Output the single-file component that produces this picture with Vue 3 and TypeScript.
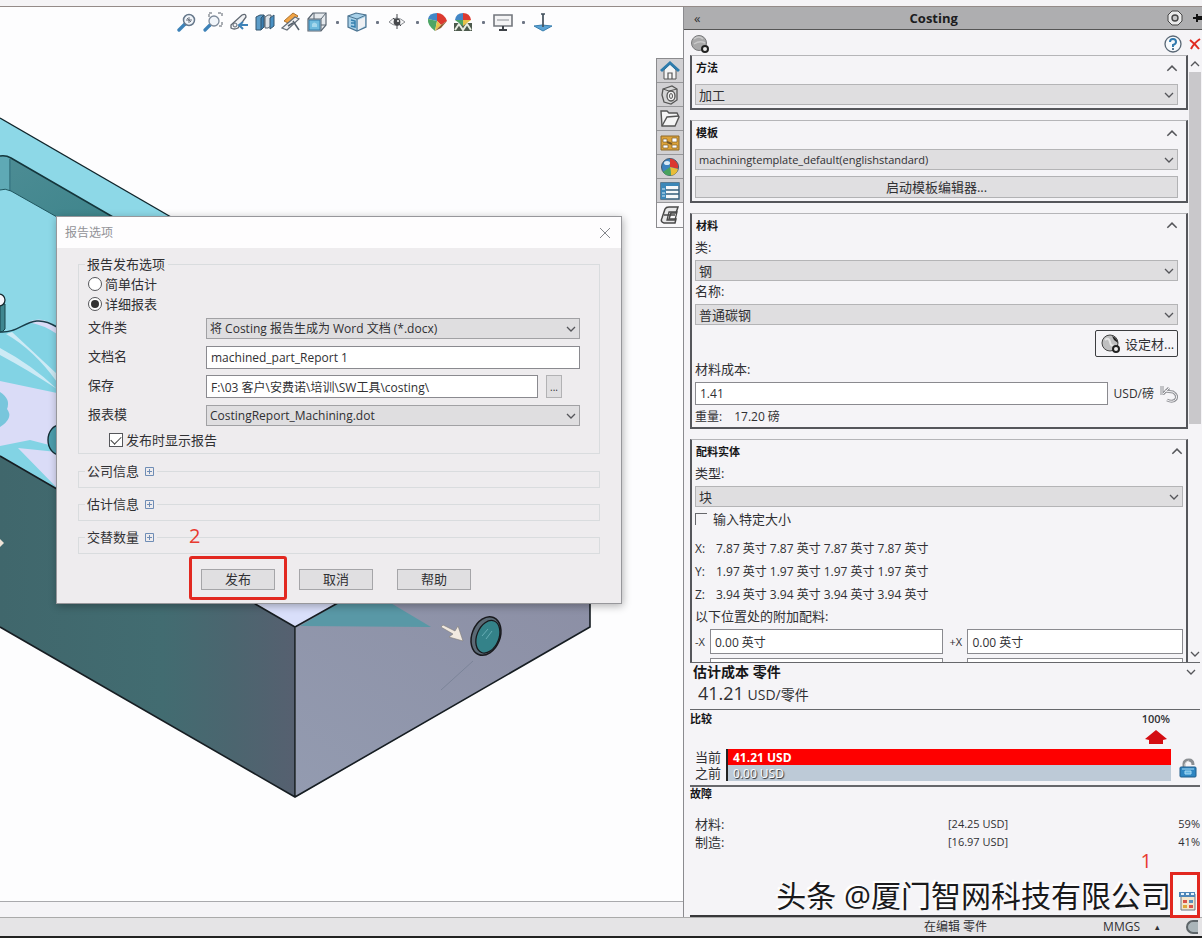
<script setup lang="ts">
import { ref } from 'vue'

const method = ref('加工')
const template = ref('machiningtemplate_default(englishstandard)')
const materialClass = ref('钢')
const materialName = ref('普通碳钢')
const materialCost = ref('1.41')
const stockType = ref('块')
const customSize = ref(false)
const reportMode = ref('detailed')
const fileType = ref('将 Costing 报告生成为 Word 文档 (*.docx)')
const docName = ref('machined_part_Report 1')
const savePath = ref('F:\\03 客户\\安费诺\\培训\\SW工具\\costing\\')
const reportTemplate = ref('CostingReport_Machining.dot')
const showReport = ref(true)

const dimensions = [
  { axis: 'X:', value: '7.87 英寸' },
  { axis: 'Y:', value: '1.97 英寸' },
  { axis: 'Z:', value: '3.94 英寸' },
]
const breakdown = [
  { label: '材料:', cost: '[24.25 USD]', share: '59%' },
  { label: '制造:', cost: '[16.97 USD]', share: '41%' },
]
const extraGroups = ['公司信息', '估计信息', '交替数量']
</script>

<template>
  <div class="app">
    <div class="topstrip"></div>
    <main class="main">
      <section class="viewport">
        <svg class="scene" viewBox="0 7 683 895" width="683" height="895" aria-hidden="true">
          <defs>
            <linearGradient id="leftFace" x1="0" x2="1" y1="0" y2="0">
              <stop offset="0" stop-color="#40676c" />
              <stop offset="0.55" stop-color="#426c71" />
              <stop offset="0.8" stop-color="#4c656f" />
              <stop offset="1" stop-color="#566070" />
            </linearGradient>
            <linearGradient id="pocket" x1="0" x2="1" y1="0" y2="1">
              <stop offset="0" stop-color="#4c8c94" />
              <stop offset="1" stop-color="#3f858c" />
            </linearGradient>
            <linearGradient id="rightFace" x1="0" x2="1" y1="1" y2="0">
              <stop offset="0" stop-color="#939bb0" />
              <stop offset="1" stop-color="#8c8fa5" />
            </linearGradient>
          </defs>
          <path d="M0 118 L171 217 L171 500 L0 500Z" fill="#8dd8e7" />
          <path d="M0 156 Q6 155 11 158 L11 191 Q5 188 0 190Z" fill="#5fa9b5" />
          <path d="M11 158 L113 217 L57 217 L11 191Z" fill="url(#pocket)" />
          <path d="M0 118 L171 217" stroke="#10242a" stroke-width="1.4" />
          <path d="M0 156 Q6 155 11 158 L113 217" fill="none" stroke="#14353b" stroke-width="1.5" />
          <path d="M10 159 V191 M0 190 Q5 188 11 191 L57 217" fill="none" stroke="#1f555e" stroke-width="1" />
          <path d="M0 332 C22 334 30 310 57 327 L57 490 L0 456Z" fill="#82d3e4" />
          <path d="M28 322 Q42 315 57 327 V334 Q44 325 28 322Z M0 381 L57 393 V447 L30 440 L0 446Z M18 448 L57 452 V488Z" fill="#dadcf7" />
          <path d="M12 332 L57 374 V382 Q34 350 6 334Z M0 348 Q32 365 57 389 Q28 370 0 355Z" fill="#e6f1fb" opacity=".75" />
          <path d="M0 392 Q11 399 7 409 Q14 418 0 427Z" fill="#78c6dc" />
          <path d="M0 332 C22 334 30 310 57 327" fill="none" stroke="#193e4a" stroke-width="1.5" />
          <path d="M0 304 H5 V329 Q3 332 0 332Z" fill="#3f8790" stroke="#18444c" />
          <circle cx="-1" cy="300" r="6" fill="#f4f4fa" stroke="#17282e" stroke-width="1.3" />
          <ellipse cx="60" cy="440" rx="12" ry="15" fill="#4d9ead" stroke="#142d34" stroke-width="1.4" />
          <path d="M0 456 L295 627 V797 L0 627Z" fill="url(#leftFace)" />
          <path d="M200 570 L296 627 L345 599 V570Z" fill="#d9dffa" />
          <path d="M296 627 L345 599 H590 V627 L296 797Z" fill="url(#rightFace)" />
          <path d="M300 626 L345 599 H384 L431 627Z" fill="#5998a6" />
          <path d="M0 456 L295 627 M295 627 V797 M0 627 L295 797 L590 627 V599 M295 627 L345 599" fill="none" stroke="#161d22" stroke-width="1.6" />
          <g transform="rotate(22 486 636)">
            <ellipse cx="486" cy="636" rx="14" ry="20" fill="#5b6975" stroke="#18191d" stroke-width="1.5" />
            <ellipse cx="488" cy="636" rx="11" ry="17" fill="#348289" stroke="#18191d" stroke-width="1.3" />
          </g>
          <path d="M482 636 L488 629 M486 639 L492 631" stroke="#68adb5" />
          <path d="M473 661 L441 690" stroke="#727d91" stroke-width=".7" />
          <path d="M441 627 L443 625 L455 631 L458 626 L463 641 L449 637 L453 634Z" fill="#f1e9e0" stroke="#817d78" stroke-width=".6" />
          <path d="M0 539 L4 543 L0 547Z" fill="#eee3d7" />
        </svg>

        <nav class="toolbar" aria-label="视图工具">
          <button class="tool" type="button" aria-label="整屏显示全图">
            <svg viewBox="0 0 20 20"><path d="M2 18 L8 12" stroke="#3d82b8" stroke-width="3.4" stroke-linecap="round" /><circle cx="12" cy="8" r="5.5" fill="#f1f5fa" stroke="#66788b" stroke-width="1.5" /><path d="M9 8h6M12 5v6M10 6l4 4" stroke="#6c7480" fill="none" /></svg>
          </button>
          <button class="tool" type="button" aria-label="局部放大">
            <svg viewBox="0 0 20 20"><path d="M2 18 L7 13" stroke="#3d82b8" stroke-width="3.2" stroke-linecap="round" /><circle cx="11" cy="9" r="5" fill="#f1f5fa" stroke="#7d8a9a" stroke-width="1.3" /><path d="M6 5V1h4M15 1h4v4M19 10v4h-3" stroke="#59616b" fill="none" stroke-dasharray="3 1" /></svg>
          </button>
          <button class="tool" type="button" aria-label="上一视图">
            <svg viewBox="0 0 20 20"><path d="M2 13 L13 3 Q17 1 17 5 L9 16 Q5 18 2 16Z" fill="#f1f2f4" stroke="#606872" stroke-width="1.3" /><circle cx="6" cy="13" r="2" fill="none" stroke="#606872" /><path d="M19 13h-7M14 10l-4 3 4 4" fill="none" stroke="#3d82b8" stroke-width="2" /></svg>
          </button>
          <button class="tool" type="button" aria-label="剖面视图">
            <svg viewBox="0 0 20 20"><path d="M1 5l4-2h4v12l-3 3H1Z" fill="#5d9dc9" stroke="#33546f" /><path d="M6 6l3-3v12l-3 3Z" fill="#3a7eb0" stroke="#33546f" /><path d="M10 5l3-2h3v11l-3 2h-3Z" fill="#dfe4e9" stroke="#56616c" /><path d="M15 6l4-3v11l-4 3Z" fill="#4a91c4" stroke="#33546f" /></svg>
          </button>
          <button class="tool" type="button" aria-label="动态注解视图">
            <svg viewBox="0 0 20 20"><path d="M3 9 L12 1l5 3-8 8Z" fill="#f2a445" stroke="#ae732f" /><path d="M1 16 L14 5l4 2L6 18Z" fill="#f1f2f4" stroke="#656e78" stroke-width="1.2" /><path d="M12 9l6 9M12 11l-5 3" stroke="#56616c" stroke-width="1.5" /></svg>
          </button>
          <button class="tool" type="button" aria-label="视图定向">
            <svg viewBox="0 0 20 20"><path d="M1 7l5-6h13v12l-5 6H1Z" fill="#e5e9ed" stroke="#596571" stroke-width="1.2" /><path d="M2 8h11v10H2Z" fill="#6fbbdd" stroke="#347da9" /><path d="M5 12q2-3 5 0v3H5Z" fill="#a5d8ec" /><path d="M1 7h13v12M14 7l5-6M7 1v6M14 13h5" fill="none" stroke="#596571" /></svg>
          </button>
          <span class="dot"></span>
          <button class="tool" type="button" aria-label="显示样式">
            <svg viewBox="0 0 20 20"><path d="M1 4l8-3 10 2v12l-9 4-9-4Z" fill="#a7d0e8" stroke="#4d7592" stroke-width="1.2" /><path d="M1 4l9 3v12M10 7l9-4" fill="none" stroke="#4d7592" /><path d="M11 8l7-3v9l-7 4Z" fill="#eef0f3" /><path d="M4 8l4 1v6l-4-1M4 11h4" fill="none" stroke="#357fad" stroke-width="1.5" /></svg>
          </button>
          <span class="dot"></span>
          <button class="tool" type="button" aria-label="隐藏项目">
            <svg viewBox="0 0 20 20"><path d="M2 10q7-8 16 0-8 7-16 0Z" fill="#f7f7f8" stroke="#8b8e93" /><circle cx="10" cy="10" r="3.4" fill="#47494c" /><path d="M10 2v15M6 6l8 8" stroke="#47494c" /><circle cx="11" cy="9" r="1" fill="#fff" /></svg>
          </button>
          <span class="dot"></span>
          <button class="tool" type="button" aria-label="编辑外观">
            <svg viewBox="0 0 20 20"><path d="M10 9L1 7Q2 1 10 1Z" fill="#4387c6" /><path d="M10 9V1q7 0 10 8l-6 4Z" fill="#dc3a30" /><path d="M10 9L1 7q-1 6 7 12Z" fill="#4da565" /><path d="M10 9l4 4-6 6Z" fill="#e7c349" /><path d="M20 9l-6 7-6 3 6-6Z" fill="#8d5d31" /></svg>
          </button>
          <button class="tool" type="button" aria-label="应用布景">
            <svg viewBox="0 0 20 20"><path d="M1 11h18v8H1Z" fill="#4c5a4c" /><path d="M2 18l4-6 4 6 4-6 4 6" fill="none" stroke="#e8ede2" stroke-width="2" /><path d="M10 8H2Q3 1 10 1Z" fill="#4387c6" /><path d="M10 8V1q7 0 8 7Z" fill="#dc3a30" /><path d="M2 8h8v6Z" fill="#4da565" /><path d="M10 8h8l-8 6Z" fill="#e7c349" /></svg>
          </button>
          <span class="dot"></span>
          <button class="tool" type="button" aria-label="视图设定">
            <svg viewBox="0 0 20 20"><path d="M1 3h18v11H1Z" fill="#f4f4f5" stroke="#73777d" stroke-width="1.6" /><path d="M4 8h12" stroke="#8a8e94" /><path d="M10 14v3M6 18h8" stroke="#3d4147" stroke-width="2" /></svg>
          </button>
          <span class="dot"></span>
          <button class="tool" type="button" aria-label="参考平面">
            <svg viewBox="0 0 20 20"><path d="M1 14l8-1 10 1-9 5Z" fill="#5ba3d4" stroke="#397faf" /><path d="M10 2v13M8 2h4" stroke="#42505c" stroke-width="1.7" /></svg>
          </button>
        </nav>

        <nav class="tabs" aria-label="任务窗格">
          <button class="tab" type="button" aria-label="主页">
            <svg viewBox="0 0 20 20"><path d="M4 9v9h12V9l-6-6Z" fill="#f4f4f4" stroke="#555" /><path d="M1 10l9-8 9 8" fill="none" stroke="#2f7cac" stroke-width="3" /><path d="M8 18v-6h4v6" fill="none" stroke="#555" stroke-width="1.2" /></svg>
          </button>
          <button class="tab" type="button" aria-label="设计库">
            <svg viewBox="0 0 20 20"><path d="M3 4l9-3 5 3v11l-6 4-7-2-2-7Z" fill="#d5d5d6" stroke="#555" stroke-width="1.3" /><path d="M3 4l6 2 8-2" fill="none" stroke="#555" /><ellipse cx="11" cy="11" rx="4" ry="5" fill="#f1f1f1" stroke="#555" stroke-width="1.3" /><ellipse cx="11" cy="11" rx="1.5" ry="2.5" fill="none" stroke="#555" /></svg>
          </button>
          <button class="tab" type="button" aria-label="文件探索器">
            <svg viewBox="0 0 20 20"><path d="M2 17L1 2h6l2 2h8l2 4-4 9Z" fill="#f5f5f5" stroke="#555" stroke-width="1.4" /><path d="M2 17l5-9 12-1" fill="none" stroke="#555" stroke-width="1.4" /></svg>
          </button>
          <button class="tab" type="button" aria-label="视图调色板">
            <svg viewBox="0 0 20 20"><path d="M1 3h18v14H1Z" fill="#dda33a" stroke="#8c682b" /><path d="M3 6h4v3H3ZM12 5h5v4h-5ZM3 12h5v3H3ZM12 12h5v3h-5Z" fill="#fff" stroke="#765929" stroke-width=".7" /><path d="M7 9l5 2" stroke="#765929" stroke-width="2" /></svg>
          </button>
          <button class="tab" type="button" aria-label="外观">
            <svg viewBox="0 0 20 20"><circle cx="10" cy="10" r="8.5" fill="#3b83c0" stroke="#425768" /><path d="M10 10V1.500a8.500 8.500 0 0 1 8 10Z" fill="#dc3730" /><path d="M10 10l8 2a8.500 8.500 0 0 1-7 6.500Z" fill="#e9bd38" /><path d="M10 10l1 8.500A8.500 8.500 0 0 1 3 15Z" fill="#48a25e" /><ellipse cx="7" cy="6" rx="3" ry="2" fill="#d9ebf7" /></svg>
          </button>
          <button class="tab" type="button" aria-label="自定义属性">
            <svg viewBox="0 0 20 20"><path d="M1 2h18v16H1Z" fill="#f6f8fa" stroke="#345d7b" stroke-width="1.4" /><path d="M1 2h5v16H1ZM1 2h18v3H1Z" fill="#3c87b8" /><path d="M6 9h13M6 13h13" stroke="#345d7b" stroke-width="1.4" /><path d="M2 8h3M2 12h3M2 15h3" stroke="#d7eaf6" /></svg>
          </button>
          <button class="tab active" type="button" aria-label="Costing">
            <svg viewBox="0 0 20 20"><path d="M5 4q1-2 4-2h9l-2 6h-5l-2 6h7l-1 4H4q-4-1-2-5Z" fill="#e7e7e8" stroke="#484848" stroke-width="1.5" /><path d="M9 7h8l-2 8H7ZM4 10h11" fill="none" stroke="#484848" stroke-width="1.3" /></svg>
          </button>
        </nav>

        <form class="dialog" role="dialog" aria-label="报告选项" @submit.prevent>
          <header class="dlg-title">
            <span>报告选项</span>
            <button class="close" type="button" aria-label="关闭">
              <svg viewBox="0 0 12 12" width="12" height="12"><path d="M1 1l10 10M11 1L1 11" stroke="#85878c" /></svg>
            </button>
          </header>
          <fieldset class="group first">
            <legend>报告发布选项</legend>
            <label class="choice"><input v-model="reportMode" type="radio" name="mode" value="simple" />简单估计</label>
            <label class="choice"><input v-model="reportMode" type="radio" name="mode" value="detailed" />详细报表</label>
            <div class="form-grid">
              <label for="fileType">文件类</label>
              <div class="select">
                <select id="fileType" v-model="fileType"><option>{{ fileType }}</option></select>
                <svg viewBox="0 0 10 6"><path d="M1 1l4 4 4-4" /></svg>
              </div>
              <label for="docName">文档名</label>
              <input id="docName" v-model="docName" class="text" type="text" />
              <label for="savePath">保存</label>
              <div class="path">
                <input id="savePath" v-model="savePath" class="text" type="text" />
                <button class="btn" type="button" aria-label="浏览">...</button>
              </div>
              <label for="reportTemplate">报表模</label>
              <div class="select">
                <select id="reportTemplate" v-model="reportTemplate"><option>{{ reportTemplate }}</option></select>
                <svg viewBox="0 0 10 6"><path d="M1 1l4 4 4-4" /></svg>
              </div>
            </div>
            <label class="choice indent"><input v-model="showReport" type="checkbox" />发布时显示报告</label>
          </fieldset>
          <fieldset v-for="name in extraGroups" :key="name" class="group extra">
            <legend>
              {{ name }}
              <button class="expand" type="button" :aria-label="'展开' + name">
                <svg viewBox="0 0 9 9" width="9" height="9"><path d="M.5.5h8v8h-8ZM2 4.500h5M4.500 2v5" fill="none" stroke="#6f8db5" /></svg>
              </button>
            </legend>
          </fieldset>
          <footer class="dlg-actions">
            <span class="marked">
              <button class="btn" type="submit">发布</button>
              <span class="ring"></span>
              <span class="step">2</span>
            </span>
            <button class="btn" type="button">取消</button>
            <button class="btn" type="button">帮助</button>
          </footer>
        </form>
      </section>

      <aside class="panel">
        <header class="panel-head">
          <button class="plain" type="button" aria-label="折叠">«</button>
          <h1>Costing</h1>
          <button class="plain" type="button" aria-label="选项">
            <svg viewBox="0 0 16 16" width="16" height="16"><path d="M5 1h6l4 4v6l-4 4H5l-4-4V5Z" fill="#e9e9ea" stroke="#444" /><circle cx="8" cy="8" r="3" fill="#c6c6c8" stroke="#444" stroke-width="1.4" /></svg>
          </button>
          <button class="plain pin" type="button" aria-label="固定">
            <svg viewBox="0 0 10 12" width="10" height="12"><path d="M1 6h3M5 2v8" stroke="#111" stroke-width="2" /><path d="M5 4h5v4H5Z" fill="#111" /></svg>
          </button>
        </header>
        <div class="panel-tools">
          <button class="plain" type="button" aria-label="材料">
            <svg viewBox="0 0 20 20" width="20" height="20"><circle cx="9" cy="9" r="7.500" fill="#a8a8a9" stroke="#77787a" /><path d="M4 5q5-4 9 0M4 10q6-4 11-1" fill="none" stroke="#c9c9ca" stroke-width="1.500" /><circle cx="15" cy="15" r="3" fill="#eee" stroke="#222" stroke-width="2" /></svg>
          </button>
          <span class="spacer"></span>
          <button class="plain" type="button" aria-label="帮助">
            <svg viewBox="0 0 18 18" width="18" height="18"><circle cx="9" cy="9" r="8" fill="#f7fafd" stroke="#596775" stroke-width="1.300" /><path d="M6 7q0-3 3-3t3 3q0 2-3 3v2" fill="none" stroke="#2f79ae" stroke-width="2" /><circle cx="9" cy="14" r="1" fill="#234e70" /></svg>
          </button>
          <button class="plain" type="button" aria-label="关闭面板">
            <svg viewBox="0 0 12 12" width="12" height="12"><path d="M1 2q5 4 9 9M11 1Q5 5 2 11" fill="none" stroke="#e02a20" stroke-width="2" /></svg>
          </button>
        </div>

        <div class="scroller">
          <div class="cards">
            <section class="card">
              <header><h2>方法</h2><svg viewBox="0 0 10 6"><path d="M1 5l4-4 4 4" /></svg></header>
              <div class="select">
                <select v-model="method" aria-label="方法"><option>{{ method }}</option></select>
                <svg viewBox="0 0 10 6"><path d="M1 1l4 4 4-4" /></svg>
              </div>
            </section>

            <section class="card">
              <header><h2>模板</h2><svg viewBox="0 0 10 6"><path d="M1 5l4-4 4 4" /></svg></header>
              <div class="select">
                <select v-model="template" aria-label="模板"><option>{{ template }}</option></select>
                <svg viewBox="0 0 10 6"><path d="M1 1l4 4 4-4" /></svg>
              </div>
              <button class="btn wide" type="button">启动模板编辑器...</button>
            </section>

            <section class="card fields">
              <header><h2>材料</h2><svg viewBox="0 0 10 6"><path d="M1 5l4-4 4 4" /></svg></header>
              <label class="line" for="matClass">类:</label>
              <div class="select">
                <select id="matClass" v-model="materialClass"><option>{{ materialClass }}</option></select>
                <svg viewBox="0 0 10 6"><path d="M1 1l4 4 4-4" /></svg>
              </div>
              <label class="line" for="matName">名称:</label>
              <div class="select">
                <select id="matName" v-model="materialName"><option>{{ materialName }}</option></select>
                <svg viewBox="0 0 10 6"><path d="M1 1l4 4 4-4" /></svg>
              </div>
              <button class="set-material" type="button">
                <svg viewBox="0 0 20 20" width="20" height="20"><circle cx="9" cy="9" r="8" fill="#bfbfc0" stroke="#444" /><path d="M11 2q5 2 6 7l-4-3Z" fill="#222" /><path d="M4 6q4-3 5 2t4 3" fill="none" stroke="#e6e6e6" stroke-width="2" /><circle cx="15" cy="15" r="3" fill="#eee" stroke="#222" stroke-width="2" /></svg>
                设定材...
              </button>
              <label class="line" for="matCost">材料成本:</label>
              <div class="cost">
                <input id="matCost" v-model="materialCost" class="text" type="text" />
                <span>USD/磅</span>
                <button class="plain" type="button" aria-label="重设">
                  <svg viewBox="0 0 18 18" width="18" height="18"><path d="M2 1v9M3 9l6-6M5 6l8 1q5 3 3 7-3 4-9 1" fill="none" stroke="#929398" stroke-width="3" /><path d="M2 1v9M3 9l6-6M5 6l8 1q5 3 3 7-3 4-9 1" fill="none" stroke="#f4f3f6" stroke-width="1" /></svg>
                </button>
              </div>
              <p class="weight"><span>重量:</span><span>17.20 磅</span></p>
            </section>

            <section class="card fields stock">
              <header><h2>配料实体</h2><svg viewBox="0 0 10 6"><path d="M1 5l4-4 4 4" /></svg></header>
              <label class="line" for="stockType">类型:</label>
              <div class="select">
                <select id="stockType" v-model="stockType"><option>{{ stockType }}</option></select>
                <svg viewBox="0 0 10 6"><path d="M1 1l4 4 4-4" /></svg>
              </div>
              <label class="custom"><input v-model="customSize" type="checkbox" />输入特定大小</label>
              <dl class="dims">
                <div v-for="d in dimensions" :key="d.axis">
                  <dt>{{ d.axis }}</dt>
                  <dd v-for="n in 4" :key="n">{{ d.value }}</dd>
                </div>
              </dl>
              <p class="line">以下位置处的附加配料:</p>
              <div class="offsets">
                <label for="negX">-X</label><input id="negX" class="text" type="text" value="0.00 英寸" />
                <label for="posX">+X</label><input id="posX" class="text" type="text" value="0.00 英寸" />
                <span></span><input class="text" type="text" aria-label="-Y" />
                <span></span><input class="text" type="text" aria-label="+Y" />
              </div>
            </section>
          </div>
          <div class="scrollbar">
            <button type="button" aria-label="向上滚动"><svg viewBox="0 0 10 6"><path d="M1 5l4-4 4 4" /></svg></button>
            <div class="thumb"></div>
            <button type="button" aria-label="向下滚动"><svg viewBox="0 0 10 6"><path d="M1 1l4 4 4-4" /></svg></button>
          </div>
        </div>

        <section class="estimate">
          <header><h2>估计成本 零件</h2><svg viewBox="0 0 10 6"><path d="M1 1l4 4 4-4" /></svg></header>
          <p><strong>41.21</strong> USD/零件</p>
        </section>

        <section class="compare">
          <div class="compare-head">
            <h3>比较</h3>
            <div class="percent">
              <span>100%</span>
              <svg viewBox="0 0 22 14" width="22" height="14"><path d="M11 0L22 9l-4 1v4H4v-4L0 9Z" fill="#d40d12" /></svg>
            </div>
          </div>
          <div class="bars">
            <div class="names"><span>当前</span><span>之前</span></div>
            <div class="tracks">
              <div class="bar now">41.21 USD</div>
              <div class="bar before">0.00 USD</div>
            </div>
            <button class="plain lock" type="button" aria-label="锁定">
              <svg viewBox="0 0 18 20" width="18" height="20"><path d="M5 10V6q0-4 5-4 4 0 4 5" fill="none" stroke="#8b8f93" stroke-width="3" /><path d="M6 9V6q1-3 4-3" fill="none" stroke="#e4e4e4" /><rect x="1" y="9" width="16" height="10" rx="1" fill="#2f86c2" stroke="#205d8b" /><path d="M3 11h12M6 13h6v3H6Z" stroke="#a6d9f3" fill="#64b5e3" /></svg>
            </button>
          </div>
        </section>

        <section class="breakdown">
          <h3>故障</h3>
          <table>
            <tbody>
              <tr v-for="row in breakdown" :key="row.label">
                <th scope="row">{{ row.label }}</th>
                <td>{{ row.cost }}</td>
                <td>{{ row.share }}</td>
              </tr>
            </tbody>
          </table>
          <div class="watermark">头条 @厦门智网科技有限公司</div>
          <div class="report">
            <span class="step">1</span>
            <button type="button" aria-label="生成报告">
              <svg viewBox="0 0 18 20" width="18" height="20"><path d="M3 3h14v16H3Z" fill="#f3e5cb" stroke="#6c7784" /><path d="M1 1h16v5H1Z" fill="#4d86b8" /><path d="M3 3h3M8 3h3M13 3h3" stroke="#e6f2fb" stroke-width="2" /><path d="M5 9h4v3H5ZM11 14h4v3h-4Z" fill="#d9534a" /><path d="M11 9h4v3h-4Z" fill="#5890bd" /><path d="M5 14h4v3H5Z" fill="#e0a93b" /></svg>
            </button>
          </div>
        </section>
      </aside>
    </main>
    <footer class="status">
      <span class="editing">在编辑 零件</span>
      <span class="units">MMGS</span>
      <span class="caret">▴</span>
      <span class="orb"></span>
    </footer>
  </div>
</template>

<style>
html,
body {
  margin: 0;
  background: #fdfdfe;
}
</style>

<style scoped>
* {
  box-sizing: border-box;
}
.app {
  display: flex;
  flex-direction: column;
  height: 100vh;
  overflow: hidden;
  font-family: 'Open Sans', 'Noto Sans CJK SC', sans-serif;
  font-size: 13px;
  line-height: 20px;
  color: #303033;
}
h1,
h2,
h3,
p,
dl,
dd {
  margin: 0;
}
button,
input,
select {
  font: inherit;
  color: inherit;
  margin: 0;
}
button {
  padding: 0;
}
.topstrip {
  flex: none;
  height: 7px;
  background: #f5f4f6;
  border-bottom: 1px solid #948b88;
}
.main {
  flex: 1;
  min-height: 0;
  display: grid;
  grid-template-columns: minmax(0, 1fr) minmax(420px, 519px);
}

/* viewport */
.viewport {
  position: relative;
  overflow: hidden;
  background: #fdfdfe;
}
.viewport::after {
  content: '';
  position: absolute;
  left: 0;
  right: 0;
  bottom: 0;
  height: 15px;
  background: #f5f4f7;
  border-top: 1px solid #a9a9ad;
}
.scene {
  position: absolute;
  left: 0;
  top: 0;
}
.toolbar {
  position: relative;
  display: flex;
  align-items: center;
  height: 30px;
  padding-left: 174px;
}
.tool {
  width: 26px;
  height: 24px;
  display: grid;
  place-items: center;
  background: none;
  border: 0;
}
.tool svg {
  width: 20px;
  height: 20px;
  fill: none;
}
.dot {
  width: 14px;
  height: 24px;
  display: grid;
  place-items: center;
}
.dot::after {
  content: '';
  width: 3px;
  height: 3px;
  background: #6d7584;
  border-radius: 1px;
}
.tabs {
  position: absolute;
  right: 0;
  top: 51px;
  width: 27px;
  border: 1px solid #8b8b8e;
  border-right: 0;
  background: #d1d0d3;
}
.tab {
  display: grid;
  place-items: center;
  width: 100%;
  height: 24px;
  background: none;
  border: 0;
  border-bottom: 1px solid #97979a;
}
.tab svg {
  width: 20px;
  height: 20px;
}
.tab.active {
  background: #f9f8fa;
  border-bottom: 0;
}

/* shared controls */
.select {
  display: grid;
  height: 21px;
}
.select select {
  grid-area: 1 / 1;
  width: 100%;
  min-width: 0;
  height: 21px;
  padding: 0 20px 0 3px;
  appearance: none;
  background: #dfdee0;
  border: 1px solid #b4b4b6;
  border-radius: 0;
  font-size: 12px;
}
.select svg {
  grid-area: 1 / 1;
  align-self: center;
  justify-self: end;
  margin-right: 4px;
  pointer-events: none;
}
.select svg,
.card header svg,
.scrollbar svg,
.estimate header svg {
  width: 10px;
  height: 6px;
  fill: none;
  stroke: #55565a;
  stroke-width: 1.3;
}
.text {
  min-width: 0;
  width: 100%;
  height: 23px;
  padding: 0 4px;
  background: #fff;
  border: 1px solid #8a8a8f;
  border-radius: 0;
  font-size: 12px;
}
.btn {
  background: #e0dfe1;
  border: 1px solid #b2b2b4;
  border-radius: 0;
}
.plain {
  display: grid;
  place-items: center;
  background: none;
  border: 0;
}

/* dialog */
.dialog {
  position: absolute;
  left: 56px;
  top: 209px;
  width: 566px;
  padding-bottom: 13px;
  background: #eeecee;
  border: 1px solid #97979b;
  box-shadow: 1px 2px 8px rgba(0, 0, 0, 0.3);
}
.dlg-title {
  display: flex;
  align-items: center;
  justify-content: space-between;
  height: 31px;
  padding: 0 10px 0 8px;
  background: #fefdfe;
  color: #929297;
  font-size: 12px;
}
.close {
  display: grid;
  background: none;
  border: 0;
}
.group {
  min-width: 0;
  margin: 0 21px;
  border: 1px solid #d9dcde;
}
.group legend {
  height: 20px;
  padding: 0 3px 0 2px;
}
.first {
  margin-top: 6px;
  padding: 0 19px 3px 9px;
}
.first legend {
  margin-left: -3px;
}
.choice {
  display: flex;
  align-items: center;
  height: 20px;
}
.choice input {
  appearance: none;
  display: grid;
  place-items: center;
  width: 14px;
  height: 14px;
  margin-right: 3px;
  background: #fff;
  border: 1px solid #55565a;
}
.choice input[type='radio'] {
  border-radius: 50%;
}
.choice input[type='radio']:checked::after {
  content: '';
  width: 8px;
  height: 8px;
  border-radius: 50%;
  background: #333;
}
.choice input[type='checkbox']:checked::after {
  content: '';
  width: 9px;
  height: 5px;
  margin-bottom: 3px;
  border-left: 1px solid #444;
  border-bottom: 1px solid #444;
  transform: rotate(-45deg);
}
.indent {
  padding-left: 21px;
}
.form-grid {
  display: grid;
  grid-template-columns: 118px minmax(0, 1fr);
  grid-auto-rows: 29px;
  align-items: center;
}
.form-grid > label {
  padding-bottom: 3px;
}
.form-grid .select select {
  border-color: #a1a1a4;
}
.path {
  display: grid;
  grid-template-columns: minmax(0, 1fr) 16px;
  gap: 8px;
  padding-right: 18px;
}
.path .btn {
  font-size: 10px;
}
.extra {
  height: 27px;
  margin-top: 6px;
  padding: 0 6px;
}
.first + .extra {
  margin-top: 7px;
}
.extra legend {
  display: flex;
  align-items: center;
  gap: 6px;
}
.expand {
  display: grid;
  background: none;
  border: 0;
}
.dlg-actions {
  display: flex;
  gap: 24px;
  padding: 15px 0 0 144px;
}
.dlg-actions .btn {
  width: 74px;
  height: 21px;
  line-height: 17px;
  border-color: #a5a5a8;
}
.marked {
  position: relative;
}
.ring {
  position: absolute;
  inset: -13px -12px -10px;
  border: 3px solid #e22820;
  border-radius: 3px;
  pointer-events: none;
}
.step {
  font-size: 20px;
  color: #e83a30;
}
.marked .step {
  position: absolute;
  left: -12px;
  top: -43px;
}

/* costing panel */
.panel {
  display: flex;
  flex-direction: column;
  min-width: 0;
  min-height: 0;
  background: #f5f4f7;
  border-left: 1px solid #8b8b8f;
}
.panel-head {
  flex: none;
  display: flex;
  align-items: center;
  height: 23px;
  padding-left: 10px;
  background: #aeaeb0;
  border-bottom: 1px solid #555;
}
.panel-head h1 {
  flex: 1;
  font-size: 13px;
  line-height: 20px;
  text-align: center;
  color: #1c1c1e;
}
.pin {
  margin-left: 9px;
}
.panel-tools {
  flex: none;
  display: flex;
  align-items: center;
  gap: 7px;
  height: 25px;
  padding: 2px 1px 0 6px;
}
.spacer {
  flex: 1;
}
.scroller {
  flex: 1;
  min-height: 0;
  display: flex;
  overflow: hidden;
}
.cards {
  flex: 1;
  min-width: 0;
  display: flex;
  flex-direction: column;
  gap: 10px;
  padding: 0 1px 0 6px;
}
.card {
  flex: none;
  padding: 0 8px 3px 3px;
  border: solid #55565b;
  border-width: 1px 2px 2px;
  border-top-color: #b5b5b8;
}
.card header {
  display: flex;
  align-items: center;
  justify-content: space-between;
  height: 24px;
  margin-bottom: 4px;
}
.card header svg {
  width: 12px;
  height: 7px;
}
.card h2 {
  padding-left: 1px;
  font-size: 11px;
  color: #161618;
}
.card.fields header {
  height: 23px;
  margin-bottom: 0;
}
.wide {
  display: block;
  width: 100%;
  height: 22px;
  margin-top: 6px;
  line-height: 17px;
}
.line {
  display: block;
  height: 23px;
  line-height: 21px;
}
.cards .select select {
  font-size: 13px;
}
.cards .card:nth-child(2) select {
  font-size: 11px;
}
.set-material {
  display: flex;
  align-items: center;
  gap: 4px;
  width: 83px;
  height: 27px;
  margin: 5px 0 2px auto;
  padding-left: 5px;
  background: #f5f4f7;
  border: 1px solid #3c3d40;
  border-radius: 2px;
  white-space: nowrap;
}
.cost {
  display: flex;
  align-items: center;
  gap: 6px;
  height: 23px;
  font-size: 12px;
}
.cost span {
  white-space: nowrap;
}
.weight {
  display: flex;
  gap: 12px;
  height: 19px;
  line-height: 24px;
  font-size: 12px;
}
.stock {
  padding-right: 3px;
}
.custom {
  display: flex;
  align-items: center;
  gap: 6px;
  height: 24px;
}
.custom input {
  appearance: none;
  width: 12px;
  height: 12px;
  border: solid #66676b;
  border-width: 1px 0 0 1px;
}
.dims {
  padding-top: 6px;
  font-size: 12px;
}
.dims div {
  display: flex;
  gap: 3px;
  height: 23px;
  line-height: 23px;
}
.dims dt {
  width: 18px;
}
.offsets {
  display: grid;
  grid-template-columns: 15px minmax(0, 13fr) 24px minmax(0, 12fr);
  row-gap: 4px;
  align-items: center;
  font-size: 11px;
}
.offsets .text {
  height: 25px;
}
.offsets label:nth-of-type(even) {
  padding-left: 6px;
}
.scrollbar {
  flex: none;
  display: flex;
  flex-direction: column;
  width: 12px;
  margin-right: 1px;
}
.scrollbar button {
  display: grid;
  place-items: center;
  height: 17px;
  background: none;
  border: 0;
}
.scrollbar svg {
  width: 10px;
}
.thumb {
  flex: 0 1 58%;
  margin-bottom: auto;
  background: #c9c8cb;
}

/* totals */
.estimate,
.compare,
.breakdown {
  flex: none;
  margin: 0 2px 0 6px;
  border-top: 1px solid #66676b;
}
.estimate {
  height: 47px;
  padding-left: 3px;
}
.estimate header {
  display: flex;
  align-items: center;
  justify-content: space-between;
  height: 18px;
  padding-right: 4px;
}
.estimate h2 {
  font-size: 14px;
  color: #161618;
}
.estimate p {
  padding-left: 5px;
  line-height: 24px;
  font-size: 14px;
}
.estimate strong {
  font-size: 18px;
  font-weight: 400;
}
.compare {
  height: 76px;
}
.compare-head {
  display: flex;
  justify-content: space-between;
  height: 39px;
  padding-right: 30px;
}
h3 {
  font-size: 11px;
  line-height: 18px;
  color: #161618;
}
.percent {
  display: flex;
  flex-direction: column;
  align-items: center;
  gap: 2px;
  font-size: 11px;
  font-weight: 600;
  line-height: 18px;
}
.bars {
  display: grid;
  grid-template-columns: 36px minmax(0, 1fr) 29px;
}
.lock {
  padding: 6px 0 0 5px;
}
.names {
  display: grid;
  padding-left: 5px;
  line-height: 16px;
}
.tracks {
  border-left: 2px solid #222;
}
.bar {
  height: 16px;
  padding-left: 5px;
  line-height: 17px;
  font-size: 12px;
  font-weight: 700;
  color: #fff;
}
.now {
  background: #fe0000;
}
.before {
  background: #bdcad7;
  font-weight: 400;
  text-shadow: 1px 1px 1px #222;
}
.breakdown {
  position: relative;
  height: 132px;
  border-top-width: 2px;
  border-bottom: 2px solid #37373a;
}
.breakdown h3 {
  line-height: 14px;
}
.breakdown table {
  width: 100%;
  margin-top: 14px;
  border-collapse: collapse;
  table-layout: fixed;
  font-size: 11px;
}
.breakdown th,
.breakdown td {
  height: 18px;
  padding: 0;
  line-height: 18px;
  text-align: left;
  font-weight: 400;
}
.breakdown th {
  width: 50%;
  padding-left: 5px;
  font-size: 13px;
}
.breakdown td:nth-child(2) {
  padding-left: 3px;
}
.breakdown td:last-child {
  width: 40px;
  text-align: right;
}
.watermark {
  position: absolute;
  right: 29px;
  bottom: 0;
  z-index: 1;
  font-size: 30px;
  line-height: 38px;
  white-space: nowrap;
  color: #19191b;
  text-shadow: -1px -1px 0 #fff, -2px -2px 1px #fff;
}
.report button {
  position: absolute;
  right: 0;
  bottom: -3px;
  width: 30px;
  height: 46px;
  padding: 16px 0 0 3px;
  background: #fafafb;
  border: 3px solid #e22820;
}
.report .step {
  position: absolute;
  right: 48px;
  bottom: 44px;
}

/* status bar */
.status {
  flex: none;
  display: flex;
  align-items: center;
  height: 21px;
  background: #e5e4e6;
  border-top: 1px solid #aaa;
  border-bottom: 2px solid #222;
  font-size: 12px;
}
.editing {
  margin-left: auto;
}
.units {
  margin-left: 116px;
}
.caret {
  margin-left: 15px;
  font-size: 9px;
}
.orb {
  width: 12px;
  height: 14px;
  margin-left: 26px;
  margin-right: 4px;
  border: 2px solid #5d6468;
  border-right: 0;
  border-radius: 7px 0 0 7px;
  background: #aab5b9;
}
</style>
